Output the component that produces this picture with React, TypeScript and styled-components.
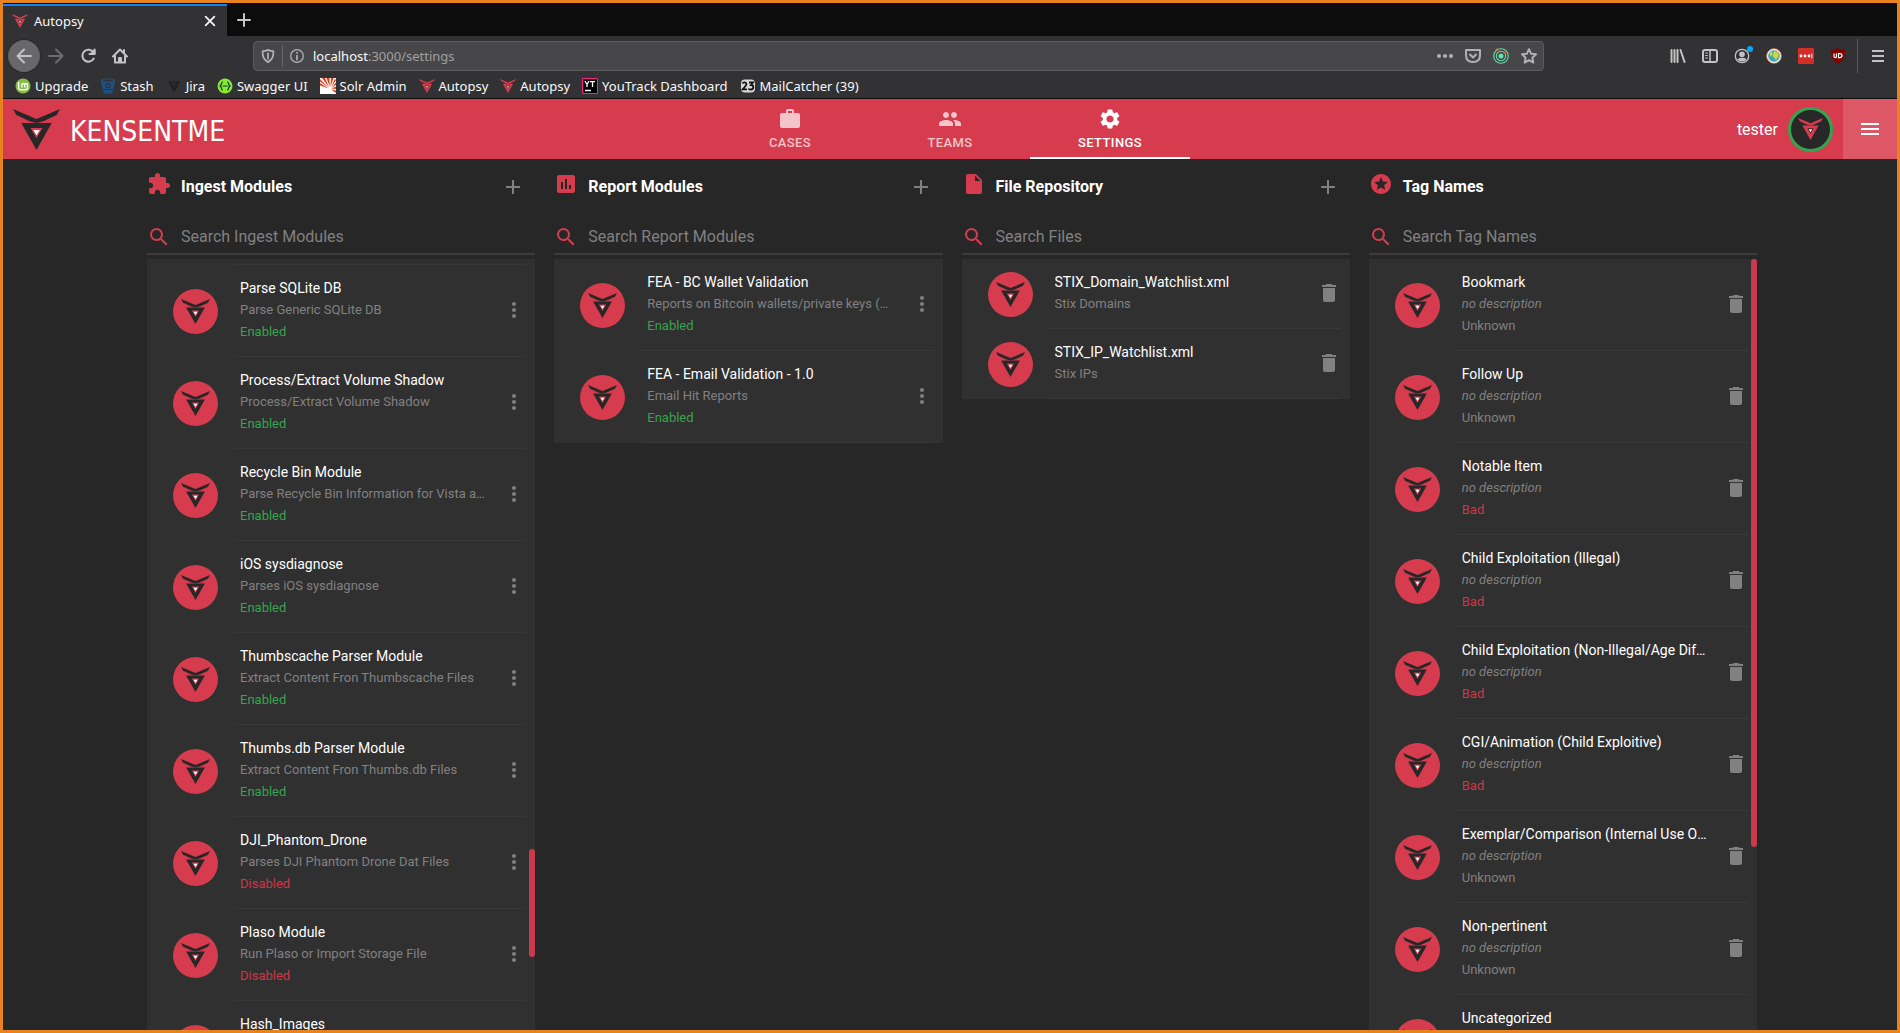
import React from "react";
import styled, { createGlobalStyle, css } from "styled-components";
import {
  MdAdd,
  MdAssessment,
  MdDelete,
  MdExtension,
  MdInsertDriveFile,
  MdMenu,
  MdMoreVert,
  MdPeople,
  MdSearch,
  MdSettings,
  MdStars,
  MdWork,
} from "react-icons/md";

const color = {
  frame: "#e8821f",
  brand: "#d63c4e",
  brandSoft: "#dd5766",
  dark: "#272727",
  paper: "#303030",
  line: "#3c3c3c",
  muted: "#818181",
  green: "#35a44f",
  red: "#cb384a",
  chrome: "#323234",
};

const GlobalStyle = createGlobalStyle`
  * { box-sizing: border-box; }
  body { margin: 0; background: ${color.dark}; font-family: Roboto, sans-serif; }
  button { font: inherit; color: inherit; background: none; border: 0; padding: 0; cursor: pointer; }
  a { color: inherit; text-decoration: none; }
  svg { display: block; flex: none; }
  h2, h3, p, ul { margin: 0; padding: 0; }
`;

const Shell = styled.div`
  display: flex;
  flex-direction: column;
  height: 100vh;
  border: 3px solid ${color.frame};
  overflow: hidden;
  background: ${color.dark};
`;

/* ---------- browser chrome ---------- */

const Chrome = styled.div`
  flex: none;
  color: #f9f9fa;
  background: ${color.chrome};
  border-bottom: 1px solid #0c0c0d;
  font-family: "Noto Sans", "Open Sans", sans-serif;
  font-size: 13px;
`;

const TabStrip = styled.div`
  display: flex;
  height: 33px;
  padding-top: 1px;
  background: #0c0c0d;
`;

const BrowserTab = styled.div`
  display: flex;
  align-items: center;
  gap: 6px;
  width: 224px;
  padding: 0 10px 0 9px;
  border-top: 2px solid #0a84ff;
  background: ${color.chrome};
`;

const TabTitle = styled.span`
  flex: 1;
`;

const NewTab = styled.button`
  display: grid;
  place-items: center;
  width: 34px;
  color: #c8c8c8;
`;

const Toolbar = styled.div`
  display: flex;
  align-items: center;
  height: 40px;
  padding: 0 3px 0 5px;
  color: #c3c3c4;
`;

const ToolButton = styled.button<{ $round?: boolean; $dim?: boolean }>`
  display: grid;
  place-items: center;
  width: 32px;
  height: 32px;
  border-radius: 50%;
  ${(p) => p.$round && css`background: #68686a; box-shadow: 0 0 0 1px #29292b;`}
  ${(p) => p.$dim && css`color: #6d6d6f;`}
`;

const AddressBar = styled.div`
  display: flex;
  flex: 1;
  align-items: center;
  height: 30px;
  margin: 0 118px 0 117px;
  border: 1px solid #5c5c5e;
  border-radius: 4px;
  background: #474749;
  color: #b1b1b3;
`;

const AddressButton = styled.button`
  display: grid;
  place-items: center;
  width: 28px;
  height: 28px;
`;

const AddressDivider = styled.span`
  width: 1px;
  height: 22px;
  background: #66666f;
`;

const Address = styled.div`
  flex: 1;
  padding-left: 2px;
  color: #a0a0a2;

  b {
    font-weight: 400;
    color: #f9f9fa;
  }
`;

const MenuSeparator = styled.span`
  width: 1px;
  height: 34px;
  margin: 0 4px 0 3px;
  background: #59595b;
`;

const Bookmarks = styled.nav`
  display: flex;
  align-items: center;
  gap: 12px;
  height: 22px;
  padding: 0 0 2px 12px;
`;

const Bookmark = styled.a`
  display: flex;
  align-items: center;
  gap: 4px;
  line-height: 20px;
  white-space: nowrap;
`;

/* ---------- application header ---------- */

const AppBar = styled.header`
  display: grid;
  grid-template-columns: 1fr auto 1fr;
  flex: none;
  height: 60px;
  color: #fff;
  background: ${color.brand};
`;

const Brand = styled.a`
  display: flex;
  align-items: center;
  gap: 10px;
  padding-left: 10px;
`;

const Wordmark = styled.span`
  padding-top: 6px;
  font-family: "Liberation Sans Narrow", "DejaVu Sans Condensed", sans-serif;
  font-size: 28px;
  line-height: 32px;
`;

const Tabs = styled.nav`
  display: flex;
`;

const Tab = styled.a<{ $active?: boolean }>`
  display: flex;
  flex-direction: column;
  align-items: center;
  gap: 2px;
  width: 160px;
  padding-top: 8px;
  border-bottom: 2px solid ${(p) => (p.$active ? "#fff" : "transparent")};
  color: ${(p) => (p.$active ? "#fff" : "rgba(255, 255, 255, 0.7)")};
  font-size: 13px;
  font-weight: 500;
  line-height: 20px;
  letter-spacing: 0.03em;
`;

const Account = styled.div`
  display: flex;
  align-items: center;
  justify-content: flex-end;
  gap: 10px;
  font-size: 16px;
`;

const MenuButton = styled.button`
  display: grid;
  place-items: center;
  align-self: stretch;
  width: 54px;
  background: ${color.brandSoft};
`;

/* ---------- columns ---------- */

const Columns = styled.main`
  display: grid;
  grid-template-columns: repeat(4, minmax(0, 1fr));
  grid-template-rows: minmax(0, 1fr);
  flex: 1;
  gap: 19px;
  min-height: 0;
  padding: 0 140px 0 144px;
`;

const Column = styled.section`
  display: flex;
  flex-direction: column;
  min-height: 0;
`;

const ColumnHead = styled.div`
  display: flex;
  flex: none;
  align-items: center;
  gap: 10px;
  height: 56px;
  padding-right: 10px;
  color: ${color.brand};

  > svg {
    margin-bottom: 6px;
  }
`;

const ColumnTitle = styled.h2`
  flex: 1;
  color: #fff;
  font-size: 16px;
  font-weight: 700;
  line-height: 24px;
`;

const IconButton = styled.button`
  display: grid;
  place-items: center;
  width: 24px;
  height: 24px;
  color: ${color.muted};
`;

const SearchField = styled.label`
  display: flex;
  flex: none;
  align-items: center;
  gap: 10px;
  height: 40px;
  margin-bottom: 4px;
  padding-top: 6px;
  border-bottom: 2px solid ${color.line};
  color: ${color.brand};
`;

const SearchInput = styled.input`
  flex: 1;
  min-width: 0;
  padding: 0;
  border: 0;
  outline: 0;
  background: none;
  color: #fff;
  font: 400 16px/24px Roboto, sans-serif;

  &::placeholder {
    color: ${color.muted};
    opacity: 1;
  }
`;

const ListPane = styled.div`
  position: relative;
  min-height: 0;
  background: ${color.paper};
  overflow: hidden;
`;

const List = styled.ul`
  height: 100%;
  list-style: none;
  overflow: hidden;
`;

const Divider = styled.li`
  height: 6px;
  margin: 0 9px 0 87px;
  border-bottom: 1px solid #393939;
`;

const Row = styled.li`
  display: flex;
  align-items: center;
  margin-right: 9px;
  padding-left: 26px;
`;

const RowBody = styled.div`
  display: flex;
  align-items: center;
  flex: 1;
  min-width: 0;
  gap: 16px;
  margin-left: 16px;
  padding: 12px 0 13px 6px;
  border-bottom: 1px solid #393939;
`;

const RowText = styled.div`
  flex: 1;
  min-width: 0;
  color: ${color.muted};
  font-size: 13px;
  line-height: 22px;
  font-variant-ligatures: none;

  > * {
    overflow: hidden;
    text-overflow: ellipsis;
    white-space: nowrap;
  }
`;

const RowTitle = styled.h3`
  color: #fff;
  font-size: 14px;
  font-weight: 400;
  line-height: 22px;
`;

const Detail = styled.p<{ $italic?: boolean }>`
  font-style: ${(p) => (p.$italic ? "italic" : "normal")};
`;

const Status = styled.p<{ $tone: Tone }>`
  color: ${(p) => ({ good: color.green, bad: color.red, plain: color.muted })[p.$tone]};
`;

const Medallion = styled.span<{ $ring?: boolean }>`
  display: grid;
  flex: none;
  place-items: center;
  width: 45px;
  height: 45px;
  border-radius: 50%;
  background: ${(p) => (p.$ring ? color.dark : color.brand)};
  ${(p) => p.$ring && css`border: 3px solid ${color.green};`}
`;

const ScrollThumb = styled.span<{ $from: string; $length: string }>`
  position: absolute;
  right: 0;
  top: ${(p) => p.$from};
  width: 6px;
  height: ${(p) => p.$length};
  border-radius: 3px;
  background: #c93a4c;
`;

/* ---------- drawings ---------- */

type MarkProps = { width: number; height: number; fill: string; inner: string };

const Mark = ({ width, height, fill, inner }: MarkProps) => (
  <svg width={width} height={height} viewBox="0 0 142 123" preserveAspectRatio="none" aria-hidden="true">
    <path fill={fill} d="M0 0 71 30 142 0 132 18 92 37 71 42 50 37 10 18Z" />
    <path fill={fill} d="M25 42H117L71 123Z" />
    <path fill={inner} d="M53 57H89L71 88Z" />
    <path fill="#fff" d="M61 63H81L71 79Z" />
  </svg>
);

const Favicon = () => <Mark width={16} height={14} fill="#d63c4e" inner="#2b2b2d" />;

type StrokeProps = { size?: number; width?: number; children: React.ReactNode };

const Stroke = ({ size = 16, width = 2, children }: StrokeProps) => (
  <svg
    width={size}
    height={size}
    viewBox="0 0 16 16"
    fill="none"
    stroke="currentColor"
    strokeWidth={width}
    strokeLinecap="round"
    strokeLinejoin="round"
    aria-hidden="true"
  >
    {children}
  </svg>
);

const LinuxMint = () => (
  <svg width="16" height="16" viewBox="0 0 16 16" fill="none">
    <circle cx="8" cy="8" r="7.5" fill="#86be43" />
    <path d="M3.6 4v5.5q0 2.3 2.3 2.3h4.3q2.3 0 2.3-2.3V7q0-1.5-1.4-1.5T9.700 7v2.400M9.700 7q0-1.500-1.400-1.500T6.900 7v2.400" stroke="#fff" strokeWidth="1.400" />
  </svg>
);

const StashIcon = () => (
  <svg width="16" height="16" viewBox="0 0 16 16">
    <path d="M1 2.500Q1 .5 8 .5t7 2L13.500 11H2.500Z" fill="#205081" />
    <path d="M2.800 12h10.400L12.500 15Q8 16.500 3.500 15Z" fill="#205081" />
    <ellipse cx="8" cy="2.600" rx="5" ry="1" fill="#323234" />
    <circle cx="8" cy="7.500" r="2.200" fill="none" stroke="#323234" strokeWidth="1.200" />
  </svg>
);

const JiraIcon = () => (
  <svg width="16" height="16" viewBox="0 0 16 16">
    <path d="M2 3h3.500L8 9l2.500-6H14L9.500 13h-3Z" fill="#222224" />
    <circle cx="8" cy="4" r="1.500" fill="#222224" />
  </svg>
);

const SwaggerIcon = () => (
  <svg width="16" height="16" viewBox="0 0 16 16" fill="none">
    <circle cx="8" cy="8" r="7.500" fill="#85ea2d" />
    <path d="M6 4Q4.500 4 4.500 5.500T3 8q1.500 1 1.500 2.500T6 12M10 4q1.500 0 1.500 1.500T13 8q-1.500 1-1.500 2.500T10 12M5.500 8h5" stroke="#173647" strokeWidth="1.200" />
  </svg>
);

const SolrIcon = () => (
  <svg width="16" height="16" viewBox="0 0 16 16">
    <path fill="#fff" d="M0 0h16v16H0z" />
    <path
      fill="#d9411e"
      d="M9 10 0 3.500V1ZM9.200 9.500 2 0h3ZM9.800 9 6.500 0h3ZM10.500 9 11 0h2.500ZM11 9.300 15 .5l1 2ZM11.300 10 16 4.500V7ZM11.300 10.600 16 8.500V11ZM11 11.300 16 12.500V15ZM8.700 10.500 0 7.500V5Z"
    />
  </svg>
);

const YouTrackIcon = () => (
  <svg width="16" height="16" viewBox="0 0 16 16">
    <path fill="#000" stroke="#ff1f8f" d="M.5.5h15v15H.5z" />
    <path stroke="#fff" strokeWidth="1.300" fill="none" d="M3 3l2 3.500L7 3M5 6v3M8 3.600h5M10.500 3.500V9M3 12.500h6" />
  </svg>
);

const MailCatcherIcon = () => (
  <svg width="16" height="16" viewBox="0 0 16 16">
    <rect x="1" y="1.500" width="14" height="13" rx="4" fill="#d9d6d3" />
    <path
      d="M2.500 5.500Q3 4.300 4.500 4.300T6.500 6Q6.500 7 2.700 11.300H7M9 4.500h4L11 7q2.300 0 2.300 2.200T11 11.500 8.800 10.500"
      fill="none"
      stroke="#111"
      strokeWidth="1.800"
    />
  </svg>
);

/* ---------- data ---------- */

type Tone = "good" | "bad" | "plain";
type Entry = { title: string; detail?: string; status?: string; tone?: Tone };
type ColumnData = {
  title: string;
  search: string;
  icon: React.ReactNode;
  canAdd?: boolean;
  action: "menu" | "delete";
  scrolled?: boolean;
  thumb?: { from: string; length: string };
  entries: Entry[];
};

const enabled = (title: string, detail: string): Entry => ({ title, detail, status: "Enabled", tone: "good" });
const disabled = (title: string, detail: string): Entry => ({ title, detail, status: "Disabled", tone: "bad" });
const tag = (title: string, status: string): Entry => ({
  title,
  status,
  tone: status === "Bad" ? "bad" : "plain",
});

const columns: ColumnData[] = [
  {
    title: "Ingest Modules",
    search: "Search Ingest Modules",
    icon: <MdExtension size={24} />,
    canAdd: true,
    action: "menu",
    scrolled: true,
    thumb: { from: "76.5%", length: "14%" },
    entries: [
      enabled("Parse SQLite DB", "Parse Generic SQLite DB"),
      enabled("Process/Extract Volume Shadow", "Process/Extract Volume Shadow"),
      enabled("Recycle Bin Module", "Parse Recycle Bin Information for Vista and later"),
      enabled("iOS sysdiagnose", "Parses iOS sysdiagnose"),
      enabled("Thumbscache Parser Module", "Extract Content Fron Thumbscache Files"),
      enabled("Thumbs.db Parser Module", "Extract Content Fron Thumbs.db Files"),
      disabled("DJI_Phantom_Drone", "Parses DJI Phantom Drone Dat Files"),
      disabled("Plaso Module", "Run Plaso or Import Storage File"),
      disabled("Hash_Images", "Hash Images"),
    ],
  },
  {
    title: "Report Modules",
    search: "Search Report Modules",
    icon: <MdAssessment size={24} />,
    canAdd: true,
    action: "menu",
    entries: [
      enabled("FEA - BC Wallet Validation", "Reports on Bitcoin wallets/private keys (and addresses)"),
      enabled("FEA - Email Validation - 1.0", "Email Hit Reports"),
    ],
  },
  {
    title: "File Repository",
    search: "Search Files",
    icon: <MdInsertDriveFile size={24} />,
    canAdd: true,
    action: "delete",
    entries: [
      { title: "STIX_Domain_Watchlist.xml", detail: "Stix Domains" },
      { title: "STIX_IP_Watchlist.xml", detail: "Stix IPs" },
    ],
  },
  {
    title: "Tag Names",
    search: "Search Tag Names",
    icon: <MdStars size={24} />,
    action: "delete",
    thumb: { from: "0%", length: "76.3%" },
    entries: [
      tag("Bookmark", "Unknown"),
      tag("Follow Up", "Unknown"),
      tag("Notable Item", "Bad"),
      tag("Child Exploitation (Illegal)", "Bad"),
      tag("Child Exploitation (Non-Illegal/Age Difficult)", "Bad"),
      tag("CGI/Animation (Child Exploitive)", "Bad"),
      tag("Exemplar/Comparison (Internal Use Only)", "Unknown"),
      tag("Non-pertinent", "Unknown"),
      tag("Uncategorized", "Unknown"),
    ],
  },
];

const bookmarks: { label: string; icon: React.ReactNode }[] = [
  { label: "Upgrade", icon: <LinuxMint /> },
  { label: "Stash", icon: <StashIcon /> },
  { label: "Jira", icon: <JiraIcon /> },
  { label: "Swagger UI", icon: <SwaggerIcon /> },
  { label: "Solr Admin", icon: <SolrIcon /> },
  { label: "Autopsy", icon: <Favicon /> },
  { label: "Autopsy", icon: <Favicon /> },
  { label: "YouTrack Dashboard", icon: <YouTrackIcon /> },
  { label: "MailCatcher (39)", icon: <MailCatcherIcon /> },
];

/* ---------- components ---------- */

const BrowserChrome = () => (
  <Chrome>
    <TabStrip>
      <BrowserTab>
        <Favicon />
        <TabTitle>Autopsy</TabTitle>
        <button aria-label="Close tab">
          <Stroke size={14}>
            <path d="M3 3 13 13M13 3 3 13" />
          </Stroke>
        </button>
      </BrowserTab>
      <NewTab aria-label="New tab">
        <Stroke size={16}>
          <path d="M8 2v12M2 8h12" />
        </Stroke>
      </NewTab>
    </TabStrip>
    <Toolbar>
      <ToolButton $round aria-label="Back">
        <Stroke>
          <path d="M15 8H1.500M8 1.500 1.500 8 8 14.500" />
        </Stroke>
      </ToolButton>
      <ToolButton $dim aria-label="Forward">
        <Stroke>
          <path d="M1 8h13.500M8 1.500 14.500 8 8 14.500" />
        </Stroke>
      </ToolButton>
      <ToolButton aria-label="Reload">
        <Stroke>
          <path d="M13.500 4.500A6 6 0 1 0 13.700 10.500M14.500 1.500V6H9.500" />
          <path d="M14.500 2.500V6H11Z" fill="currentColor" />
        </Stroke>
      </ToolButton>
      <ToolButton aria-label="Home">
        <Stroke>
          <path d="M1 8.500 8 1.500l7 7M3 8v6.500h10V8M12 2v3" />
          <path d="M7 14v-4h2v4" />
        </Stroke>
      </ToolButton>
      <AddressBar>
        <AddressButton aria-label="Tracking protection">
          <Stroke size={14}>
            <path d="M8 1Q11 2.500 14 2.500 15 11 8 15 1 11 2 2.500 5 2.500 8 1Z" />
            <path d="M8 5v6" />
          </Stroke>
        </AddressButton>
        <AddressDivider />
        <AddressButton aria-label="Site information">
          <Stroke size={14} width={1.500}>
            <circle cx="8" cy="8" r="7.200" />
            <path d="M8 7.500V12M8 4.200v.3" strokeWidth="2" />
          </Stroke>
        </AddressButton>
        <Address role="textbox" aria-label="Address">
          <b>localhost</b>:3000/settings
        </Address>
        <AddressButton aria-label="Page actions">
          <svg width="16" height="16" viewBox="0 0 16 16" fill="currentColor">
            <circle cx="2" cy="8" r="2" />
            <circle cx="8" cy="8" r="2" />
            <circle cx="14" cy="8" r="2" />
          </svg>
        </AddressButton>
        <AddressButton aria-label="Save to Pocket">
          <Stroke>
            <path d="M1 2h14v5q0 7-7 7T1 7Z" />
            <path d="M5 6.500 8 9.500 11 6.500" />
          </Stroke>
        </AddressButton>
        <AddressButton aria-label="Tracker radar">
          <svg width="16" height="16" viewBox="0 0 16 16" fill="none" stroke="#63d9a6" strokeWidth="1.100">
            <circle cx="8" cy="8" r="7.300" />
            <circle cx="8" cy="8" r="4.700" />
            <circle cx="8" cy="8" r="2" fill="#5cf5ae" />
            <circle cx="4" cy="1.800" r="1.400" fill="#e8722c" stroke="none" />
            <circle cx="11.500" cy="4.600" r="1.400" fill="#e8522c" stroke="none" />
          </svg>
        </AddressButton>
        <AddressButton aria-label="Bookmark this page">
          <Stroke>
            <path d="m8 1.200 2.100 4.500 4.900.6-3.600 3.400.9 4.900L8 12.200l-4.300 2.400.9-4.900L1 6.300l4.900-.6Z" />
          </Stroke>
        </AddressButton>
      </AddressBar>
      <ToolButton aria-label="Library">
        <Stroke>
          <path d="M1.500 2v12M4.500 2v12M7.500 2v12M10.500 2l4 12" />
        </Stroke>
      </ToolButton>
      <ToolButton aria-label="Sidebars">
        <Stroke>
          <rect x="1" y="2" width="14" height="12" rx="2" />
          <path d="M8 2v12" strokeWidth="1.500" />
          <path d="M3.500 5H5.500M3.500 7.500H5.500M3.500 10H5.500" strokeWidth="1" />
        </Stroke>
      </ToolButton>
      <ToolButton aria-label="Account">
        <svg width="22" height="22" viewBox="0 0 22 22" fill="none">
          <circle cx="11" cy="11" r="6.700" stroke="currentColor" strokeWidth="1.300" />
          <circle cx="11" cy="9.200" r="2.800" fill="currentColor" />
          <path d="M6.500 14.200Q8 12.800 11 12.800t4.500 1.400Q14 16.500 11 16.500T6.500 14.200Z" fill="currentColor" />
          <circle cx="19" cy="4" r="3" fill="#00a8ff" />
        </svg>
      </ToolButton>
      <ToolButton aria-label="Globe extension">
        <svg width="16" height="16" viewBox="0 0 16 16">
          <circle cx="8" cy="8" r="7.300" fill="#35a7c4" stroke="#e9783c" strokeWidth="1" />
          <circle cx="8" cy="8" r="6.400" fill="none" stroke="#f7efe6" strokeWidth="1.200" />
          <path d="M8 3 12 4.500l.8 3.500L10 12 8 9.500 6.500 8ZM3.500 5l2.500-1.500.5 2.500L4.500 9Z" fill="#d8d531" />
        </svg>
      </ToolButton>
      <ToolButton aria-label="Password manager">
        <svg width="16" height="16" viewBox="0 0 16 16">
          <rect width="16" height="16" rx="1" fill="#d32d27" />
          <g fill="#fff">
            <circle cx="3" cy="8" r="1.400" />
            <circle cx="7" cy="8" r="1.400" />
            <circle cx="11" cy="8" r="1.400" />
            <path d="M13.500 5.500h.8v5h-.8z" />
          </g>
        </svg>
      </ToolButton>
      <ToolButton aria-label="Ad blocker">
        <svg width="16" height="16" viewBox="0 0 16 16" fill="none">
          <path d="M8 0Q11 2 15 2 15.500 12 8 16 .5 12 1 2 5 2 8 0Z" fill="#800000" />
          <path d="M4 5.500v3q0 1.200 1.200 1.200t1.200-1.200V5.500M8.500 9.700V5.600h1.200Q12 5.600 12 7.600t-2.300 2.100Z" stroke="#fff" strokeWidth="1.200" />
        </svg>
      </ToolButton>
      <MenuSeparator />
      <ToolButton aria-label="Open menu">
        <Stroke>
          <path d="M3 3h10M3 8h10M3 13h10" strokeLinecap="square" />
        </Stroke>
      </ToolButton>
    </Toolbar>
    <Bookmarks aria-label="Bookmarks">
      {bookmarks.map((item, index) => (
        <Bookmark href="#" key={index}>
          {item.icon}
          {item.label}
        </Bookmark>
      ))}
    </Bookmarks>
  </Chrome>
);

const ListRow = ({ entry, action }: { entry: Entry; action: ColumnData["action"] }) => (
  <Row>
    <Medallion>
      <Mark width={29} height={25} fill="#282728" inner={color.brand} />
    </Medallion>
    <RowBody>
      <RowText>
        <RowTitle>{entry.title}</RowTitle>
        <Detail $italic={!entry.detail}>{entry.detail ?? "no description"}</Detail>
        {entry.status && <Status $tone={entry.tone ?? "plain"}>{entry.status}</Status>}
      </RowText>
      <IconButton aria-label={action === "menu" ? `Options for ${entry.title}` : `Delete ${entry.title}`}>
        {action === "menu" ? <MdMoreVert size={24} /> : <MdDelete size={24} />}
      </IconButton>
    </RowBody>
  </Row>
);

const SettingsColumn = ({ data }: { data: ColumnData }) => (
  <Column>
    <ColumnHead>
      {data.icon}
      <ColumnTitle>{data.title}</ColumnTitle>
      {data.canAdd && (
        <IconButton aria-label={`Add to ${data.title}`}>
          <MdAdd size={24} />
        </IconButton>
      )}
    </ColumnHead>
    <SearchField>
      <MdSearch size={24} />
      <SearchInput type="text" placeholder={data.search} aria-label={data.search} />
    </SearchField>
    <ListPane>
      <List>
        {data.scrolled && <Divider role="separator" />}
        {data.entries.map((entry) => (
          <ListRow key={entry.title} entry={entry} action={data.action} />
        ))}
      </List>
      {data.thumb && <ScrollThumb $from={data.thumb.from} $length={data.thumb.length} />}
    </ListPane>
  </Column>
);

export default function App() {
  return (
    <Shell>
      <GlobalStyle />
      <BrowserChrome />
      <AppBar>
        <Brand href="#">
          <Mark width={47} height={41} fill="#282728" inner={color.brand} />
          <Wordmark>KENSENTME</Wordmark>
        </Brand>
        <Tabs aria-label="Sections">
          <Tab href="#">
            <MdWork size={24} />
            CASES
          </Tab>
          <Tab href="#">
            <MdPeople size={24} />
            TEAMS
          </Tab>
          <Tab href="#" $active aria-current="page">
            <MdSettings size={24} />
            SETTINGS
          </Tab>
        </Tabs>
        <Account>
          tester
          <Medallion $ring>
            <Mark width={25} height={22} fill={color.brand} inner="#282728" />
          </Medallion>
          <MenuButton aria-label="Menu">
            <MdMenu size={24} />
          </MenuButton>
        </Account>
      </AppBar>
      <Columns>
        {columns.map((data) => (
          <SettingsColumn key={data.title} data={data} />
        ))}
      </Columns>
    </Shell>
  );
}
